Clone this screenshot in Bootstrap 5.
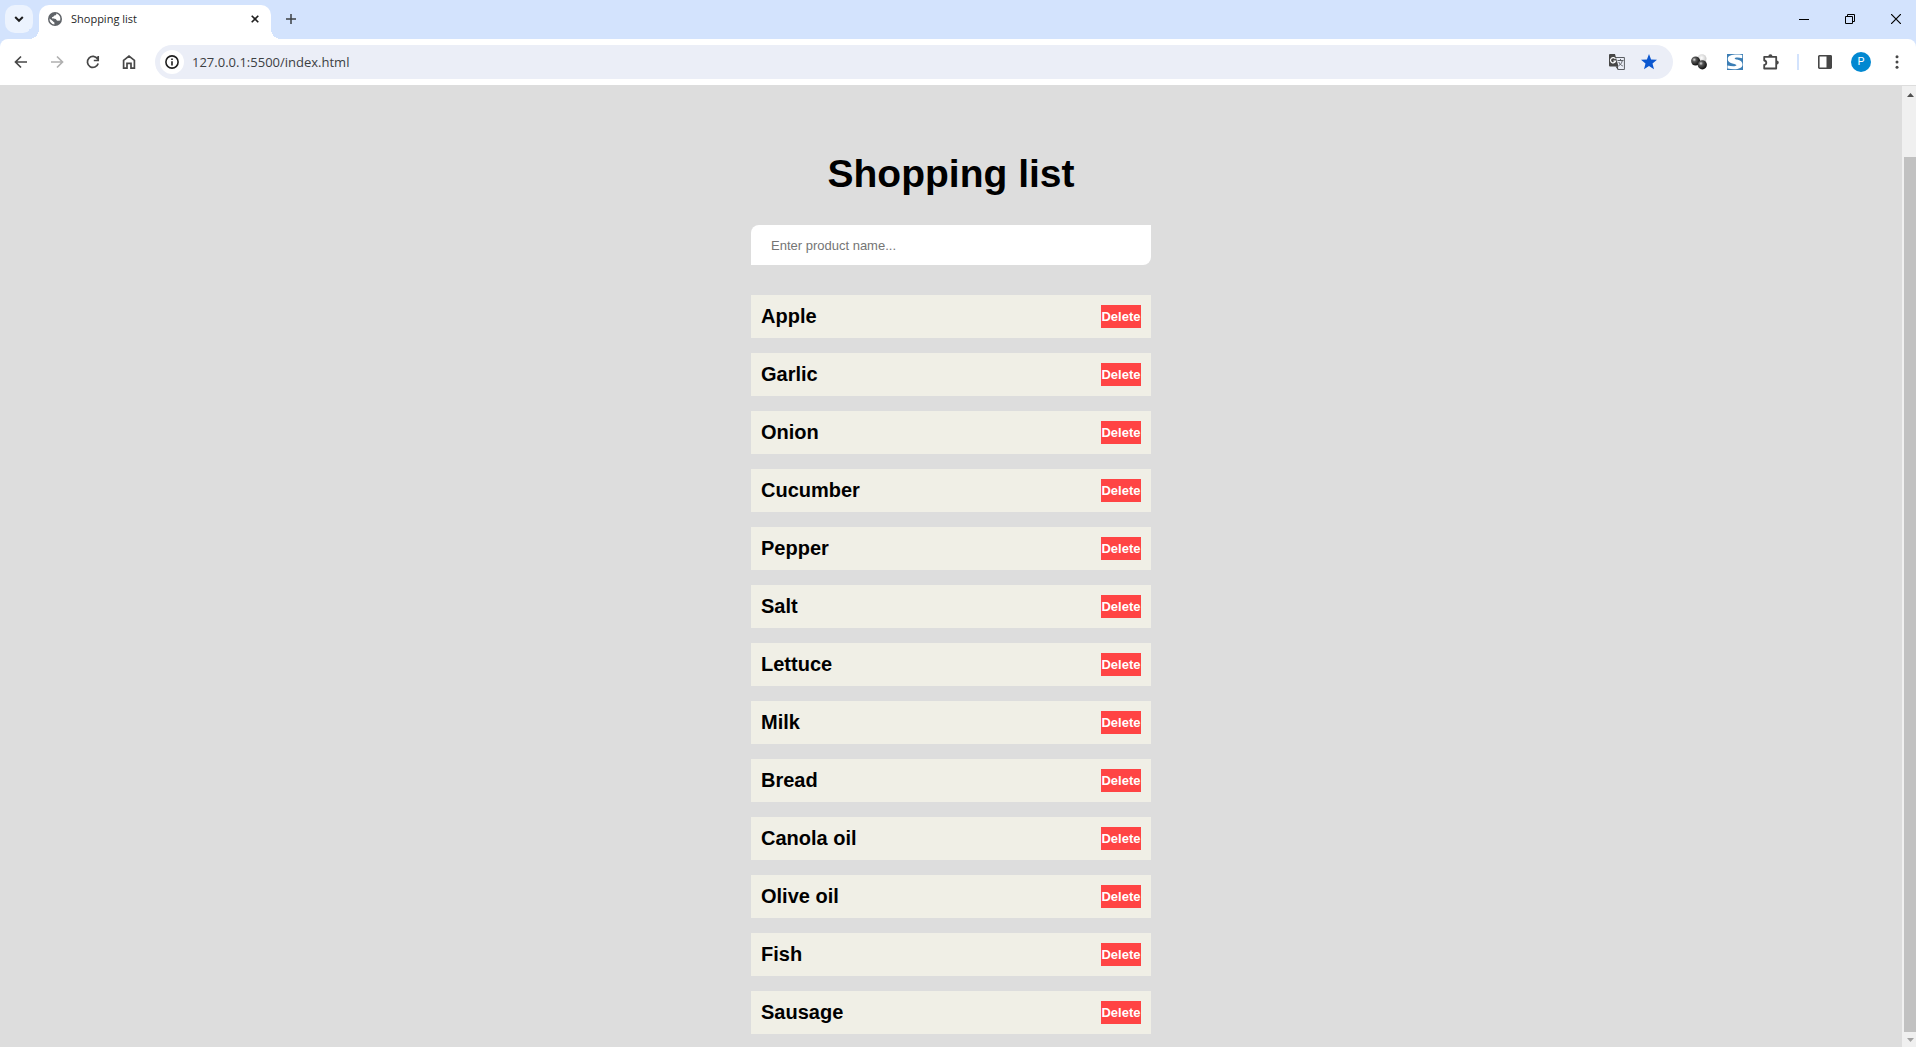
<!DOCTYPE html>
<html lang="en">
<head>
<meta charset="utf-8">
<meta name="viewport" content="width=device-width, initial-scale=1">
<title>Shopping list</title>
<link href="https://cdn.jsdelivr.net/npm/bootstrap@5.3.0/dist/css/bootstrap.min.css" rel="stylesheet">
<style>
body{font-family:"Liberation Sans",Arial,sans-serif;color:#000;background:#fff;padding-bottom:1px}
svg{display:block;flex:none}
button{border:0;padding:0;background:none;color:inherit}
.icon-btn{display:flex;align-items:center;justify-content:center;flex:none}
.chrome-font{font-family:"Open Sans","Noto Sans",sans-serif}
.tabstrip{height:39px;background:#d3e3fd;padding-left:5px}
.tab-search{width:28px;height:28px;margin-top:5px;border-radius:10px;background:#ecf3fe}
.tab-active{width:232px;height:34px;margin-left:6px;padding:0 9px 6px 9px;background:#fff;border-radius:10px 10px 0 0;font-size:11px;color:#1f1f1f;gap:9px}
.tab-active::before,.tab-active::after{content:"";position:absolute;bottom:0;width:10px;height:10px}
.tab-active::before{left:-10px;background:radial-gradient(circle at 0 0,#d3e3fd 10px,#fff 10px)}
.tab-active::after{right:-10px;background:radial-gradient(circle at 100% 0,#d3e3fd 10px,#fff 10px)}
.tab-close{width:14px;height:14px}
.tab-new{width:40px;height:38px}
.win-btns{gap:6px}
.win-btn{width:40px;height:38px}
.toolbar-wrap{background:#d3e3fd}
.toolbar-row{height:46px;background:#fff;padding:0 1px 0 3px;border-radius:8px 8px 0 0}
.tool-btn{width:36px;height:34px}
.omnibox{height:34px;border-radius:17px;background:#ebeef7;padding:0 8px 0 5px;margin:0 8px}
.site-info{width:24px;height:24px;border-radius:50%;background:#fff}
.omnibox input{border:0;background:none;outline:0;font-size:13px;color:#3c4043;padding:0 0 0 8px;height:24px}
.omni-btn{width:32px;height:34px}
.profile{width:20px;height:20px;border-radius:50%;background:#0288d1;color:#fff;font:11px/20px Roboto,sans-serif}
.tool-sep{width:2px;height:16px;margin:0 8px;background:#d3e3fd}
.viewport-area{background:#ddd}
.page-main{padding:62px 0 13px}
.shop-col{width:400px}
.shop-title{font-size:39px;line-height:54px;font-weight:700;margin-bottom:24px}
.shop-input{display:block;height:40px;border:0;border-radius:8px 0;padding:0 20px;margin-bottom:30px;font-size:13px;background:#fff}
.shop-input::placeholder{color:#757575}
.shop-items{gap:15px}
.shop-item{padding:10px;background:#f0efe6;font-size:20px;line-height:23px;font-weight:700}
.del-btn{width:40px;background:#ff4444;color:#fff;font-size:13px;line-height:23px;font-weight:700}
.scroll-rail{width:14px;background:#f0f0f0;padding-left:2px;margin-top:1px}
.scroll-end{height:17px;color:#505050}
.scroll-end-off{height:15px;color:#a3a3a3}
.scroll-gap{height:54px}
.scroll-thumb{background:#c1c1c1}
</style>
</head>
<body class="min-vh-100 d-flex flex-column">
<header class="chrome-font">
  <div class="tabstrip d-flex align-items-start">
    <button class="tab-search icon-btn" aria-label="Search tabs"><svg width="10" height="8" viewBox="0 0 10 8"><path d="M1.200 2 5 5.800 8.800 2" fill="none" stroke="#1f1f1f" stroke-width="2"/></svg></button>
    <div class="tab-active position-relative d-flex align-items-center align-self-end">
      <svg width="14" height="14" viewBox="0 0 14 14"><circle cx="7" cy="7" r="7" fill="#5f6368"/><path d="M8.300 1.500C8.600 3 7.600 3.600 6.200 3.600 5.700 5 5 5.200 3.900 5.300 4 6.500 4.600 6.700 6.800 6.700c1.700.1 1.500 2 2.900 2.100l2.500-.2A5.600 5.600 0 0 0 8.300 1.500zM1.500 6.500 5 9.200c.2.900 1.200.8 1.400 1.300v2A5.600 5.600 0 0 1 1.500 6.500z" fill="#fff"/></svg>
      <span class="text-nowrap flex-grow-1">Shopping list</span>
      <button class="tab-close icon-btn" aria-label="Close tab"><svg width="8" height="8" viewBox="0 0 8 8"><path d="m.7.7 6.600 6.600m0-6.600L.7 7.300" stroke="#1f1f1f" stroke-width="1.600"/></svg></button>
    </div>
    <button class="tab-new icon-btn" aria-label="New tab"><svg width="10" height="10" viewBox="0 0 10 10"><path d="M5 0v10M0 5h10" stroke="#3c4043" stroke-width="1.500"/></svg></button>
    <div class="win-btns d-flex ms-auto">
      <button class="win-btn icon-btn" aria-label="Minimize"><svg width="10" height="10"><path d="M0 5.500h10" stroke="#000"/></svg></button>
      <button class="win-btn icon-btn" aria-label="Restore"><svg width="10" height="10" fill="none" stroke="#000"><path d="M.5 2.500h7v7h-7zM2.500 2.500v-2h7v7h-2"/></svg></button>
      <button class="win-btn icon-btn" aria-label="Close"><svg width="10" height="10"><path d="m0 0 10 10M10 0 0 10" stroke="#000" stroke-width="1.200"/></svg></button>
    </div>
  </div>
  <div class="toolbar-wrap">
  <div class="toolbar-row d-flex align-items-center">
    <button class="tool-btn icon-btn" aria-label="Back"><svg width="14" height="14" viewBox="0 0 14 14"><path d="M13 7H2M7 1.500 1.500 7 7 12.500" fill="none" stroke="#474747" stroke-width="1.700"/></svg></button>
    <button class="tool-btn icon-btn" aria-label="Forward"><svg width="14" height="14" viewBox="0 0 14 14"><path d="M1 7h11M7 1.500 12.500 7 7 12.500" fill="none" stroke="#b0b0b0" stroke-width="1.700"/></svg></button>
    <button class="tool-btn icon-btn" aria-label="Reload"><svg width="14" height="14" viewBox="0 0 14 14"><path d="M12.200 8.500A5.500 5.500 0 1 1 11.600 4M12.200 1v4.500H7.800" fill="none" stroke="#474747" stroke-width="1.700"/></svg></button>
    <button class="tool-btn icon-btn" aria-label="Home"><svg width="14" height="14" viewBox="0 0 14 14"><path d="M1.600 13.100V5.300L7 1.100l5.400 4.200v7.800H9V8.300H5v4.800z" fill="none" stroke="#474747" stroke-width="1.700"/></svg></button>
    <div class="omnibox flex-grow-1 d-flex align-items-center">
      <button class="site-info icon-btn" aria-label="View site information"><svg width="14" height="14" viewBox="0 0 14 14"><circle cx="7" cy="7" r="6.100" fill="none" stroke="#1f1f1f" stroke-width="1.600"/><path d="M7 6.200v4.300M7 3.500v1.600" stroke="#1f1f1f" stroke-width="1.600"/></svg></button>
      <input class="flex-grow-1" type="text" aria-label="Address" value="127.0.0.1:5500/index.html">
      <button class="omni-btn icon-btn" aria-label="Translate this page"><svg width="16" height="16" viewBox="0 0 16 16"><path d="M6 3.500h9.400v12H9z" fill="#ebeef7" stroke="#5b5e63"/><path d="M0 1q0-1 1-1h5l3.500 12.500H1q-1 0-1-1z" fill="#474747"/><path d="M6.400 5A2.600 2.600 0 1 0 6.600 7H4.300" fill="none" stroke="#fff" stroke-width="1.200"/><path d="M8.500 6.500h6M11.500 5v1.500M13.300 6.500c-.4 2.600-2 4.300-3.600 5.200M9.800 8c.8 2 2.200 3.200 4 4" fill="none" stroke="#5b5e63"/><path d="M6.500 12.500h2.500V16z" fill="#474747"/></svg></button>
      <button class="omni-btn icon-btn" aria-label="Edit bookmark"><svg width="16" height="16" viewBox="0 0 16 16"><path d="m8 0 2.100 5.400 5.900.4-4.500 3.700 1.500 5.800-5-3.200-5 3.200 1.500-5.800L0 5.800l5.900-.4z" fill="#0b57d0"/></svg></button>
    </div>
    <button class="tool-btn icon-btn" aria-label="Spheres extension"><svg width="16" height="16" viewBox="0 0 16 16"><defs><radialGradient id="dark" cx=".35" cy=".35" r=".65"><stop offset="0" stop-color="#ddd"/><stop offset=".35" stop-color="#555"/><stop offset="1" stop-color="#111"/></radialGradient><radialGradient id="pale" cx=".45" cy=".4" r=".6"><stop offset="0" stop-color="#fff"/><stop offset="1" stop-color="#c4c4c4"/></radialGradient></defs><circle cx="11" cy="4.800" r="4.500" fill="url(#pale)"/><circle cx="4.600" cy="7" r="4.500" fill="url(#dark)"/><circle cx="11.300" cy="10.800" r="4.600" fill="url(#dark)"/></svg></button>
    <button class="tool-btn icon-btn" aria-label="S extension"><svg width="16" height="16" viewBox="0 0 16 16"><path d="M0 0h16v16H0z" fill="#3c7eb5"/><path d="M15.200 1v3.200c-3-.8-6.200-.8-7.200-.2-.8.600 0 1.200 2 1.600 3.700.8 5.500 2.400 5.500 5 0 4.900-8 5.500-15 3.900v-3c3.500 1 8 1.200 8.800.1.500-.9-1-1.300-3-1.800C2.600 9 .8 7.500.8 5 .8.800 8 0 15.200 1z" fill="#fff"/></svg></button>
    <button class="tool-btn icon-btn" aria-label="Extensions"><svg width="18" height="18" viewBox="0 0 18 18"><path d="M2.200 3.800h12v11.700h-12v-3.600c2.800-.4 2.800-4 0-4.400z" fill="none" stroke="#474747" stroke-width="1.800" stroke-linejoin="round"/><path d="M6.300 3.500a2.100 2.300 0 0 1 4.200 0zM14.500 7.500a2.300 2.100 0 0 1 0 4.200z" fill="#474747"/></svg></button>
    <span class="tool-sep"></span>
    <button class="tool-btn icon-btn" aria-label="Side panel"><svg width="14" height="14" viewBox="0 0 14 14"><rect x=".8" y=".8" width="12.400" height="12.400" rx=".6" fill="none" stroke="#474747" stroke-width="1.600"/><path d="M8.500 1h5v12h-5z" fill="#474747"/></svg></button>
    <button class="tool-btn icon-btn" aria-label="Profile"><span class="profile text-center">P</span></button>
    <button class="tool-btn icon-btn" aria-label="Menu"><svg width="4" height="14" viewBox="0 0 4 14" fill="#474747"><circle cx="2" cy="1.700" r="1.500"/><circle cx="2" cy="7" r="1.500"/><circle cx="2" cy="12.300" r="1.500"/></svg></button>
  </div>
  </div>
</header>
<div class="viewport-area flex-grow-1 d-flex">
  <main class="page-main flex-grow-1 d-flex justify-content-center">
    <div class="shop-col">
      <h1 class="shop-title text-center">Shopping list</h1>
      <input class="shop-input w-100" type="text" aria-label="Product name" placeholder="Enter product name...">
      <ul class="shop-items list-unstyled d-flex flex-column mb-0">
        <li class="shop-item d-flex justify-content-between"><span>Apple</span><button class="del-btn">Delete</button></li>
        <li class="shop-item d-flex justify-content-between"><span>Garlic</span><button class="del-btn">Delete</button></li>
        <li class="shop-item d-flex justify-content-between"><span>Onion</span><button class="del-btn">Delete</button></li>
        <li class="shop-item d-flex justify-content-between"><span>Cucumber</span><button class="del-btn">Delete</button></li>
        <li class="shop-item d-flex justify-content-between"><span>Pepper</span><button class="del-btn">Delete</button></li>
        <li class="shop-item d-flex justify-content-between"><span>Salt</span><button class="del-btn">Delete</button></li>
        <li class="shop-item d-flex justify-content-between"><span>Lettuce</span><button class="del-btn">Delete</button></li>
        <li class="shop-item d-flex justify-content-between"><span>Milk</span><button class="del-btn">Delete</button></li>
        <li class="shop-item d-flex justify-content-between"><span>Bread</span><button class="del-btn">Delete</button></li>
        <li class="shop-item d-flex justify-content-between"><span>Canola oil</span><button class="del-btn">Delete</button></li>
        <li class="shop-item d-flex justify-content-between"><span>Olive oil</span><button class="del-btn">Delete</button></li>
        <li class="shop-item d-flex justify-content-between"><span>Fish</span><button class="del-btn">Delete</button></li>
        <li class="shop-item d-flex justify-content-between"><span>Sausage</span><button class="del-btn">Delete</button></li>
      </ul>
    </div>
  </main>
  <div class="scroll-rail d-flex flex-column" aria-hidden="true">
    <div class="scroll-end icon-btn"><svg width="7" height="4"><path d="M0 4h7L3.500 0z" fill="currentColor"/></svg></div>
    <div class="scroll-gap"></div>
    <div class="scroll-thumb flex-grow-1"></div>
    <div class="scroll-end-off icon-btn"><svg width="7" height="4"><path d="M0 0h7L3.500 4z" fill="currentColor"/></svg></div>
  </div>
</div>
<script src="https://cdn.jsdelivr.net/npm/bootstrap@5.3.0/dist/js/bootstrap.bundle.min.js"></script>
</body>
</html>
